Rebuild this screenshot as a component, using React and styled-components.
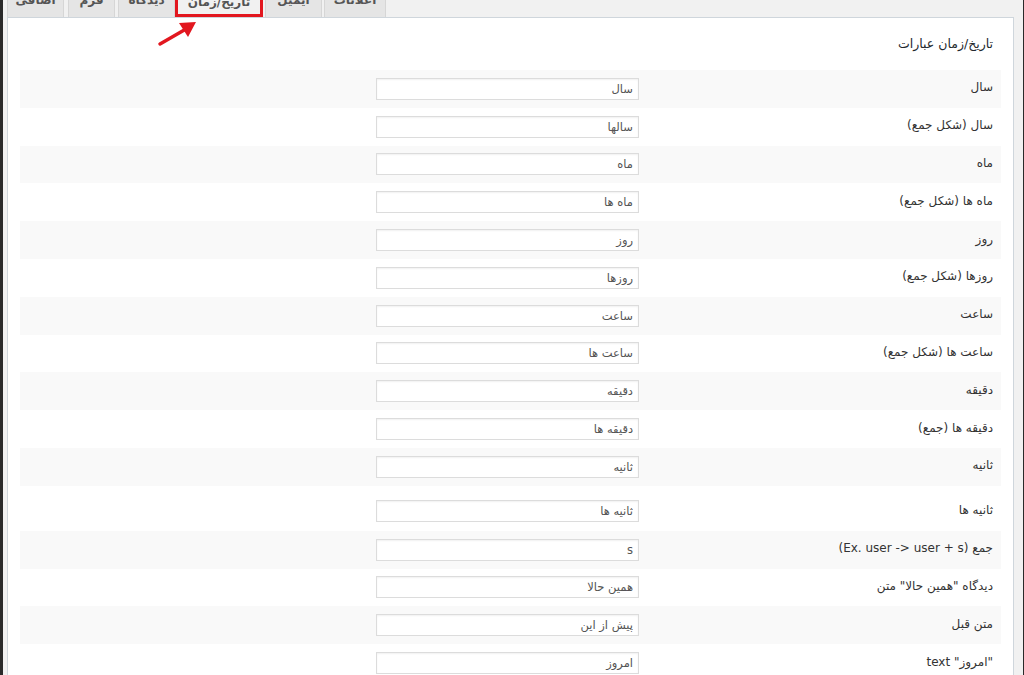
import React from 'react';
import styled, { createGlobalStyle } from 'styled-components';

const GlobalStyle = createGlobalStyle`
  html, body {
    margin: 0;
    padding: 0;
    background: #f1f1f1;
    font-family: "DejaVu Sans", Tahoma, sans-serif;
  }
`;

const Page = styled.div`
  position: relative;
  height: 675px;
  overflow: hidden;
  box-sizing: border-box;
  border-left: 3px solid #2a2a2a;
  border-right: 1px solid #2a2a2a;
  padding: 0 9px 0 4px;
  background: #f1f1f1;
  display: flex;
  flex-direction: column;
`;

const TabBar = styled.div`
  height: 17px;
  display: flex;
  align-items: flex-end;
  flex-shrink: 0;
`;

const Tab = styled.div`
  box-sizing: border-box;
  width: ${p => p.$w}px;
  margin-right: ${p => p.$gap}px;
  margin-top: -10px;
  height: 27px;
  line-height: 19px;
  text-align: center;
  font-size: 12px;
  font-weight: bold;
  color: #555;
  background: ${p => (p.$active ? '#f1f1f1' : '#e5e5e5')};
  border: ${p => (p.$active ? '3px solid #e2171f' : '1px solid #d6d6d6')};
  border-bottom: ${p => (p.$active ? '3px solid #e2171f' : 'none')};
  direction: rtl;
  white-space: nowrap;
  overflow: hidden;
`;

const Panel = styled.div`
  flex: 1;
  background: #fff;
  border: 1px solid #cfd6dc;
  border-bottom: none;
  padding: 0 12px;
  direction: rtl;
`;

const Heading = styled.h2`
  margin: 0;
  padding: 18px 8px 0 0;
  height: 52px;
  box-sizing: border-box;
  font-size: 12.5px;
  line-height: 16px;
  font-weight: normal;
  color: #23282d;
`;

const Row = styled.div`
  display: grid;
  grid-template-columns: 352px 1fr;
  align-items: center;
  height: ${p => (p.$tall ? 45 : 37.8)}px;
  padding-top: ${p => (p.$tall ? 6 : 0)}px;
  box-sizing: border-box;
  background: ${p => (p.$shade ? '#f9f9f9' : '#fff')};
`;

const Label = styled.div`
  padding-right: 8px;
  padding-bottom: 3px;
  font-size: 12px;
  color: #333;
  white-space: nowrap;
`;

const Cell = styled.div`
  padding-right: 10px;
  display: flex;
`;

const Input = styled.input`
  box-sizing: border-box;
  width: 263px;
  height: 22px;
  border: 1px solid #dcdcdc;
  box-shadow: inset 0 1px 2px rgba(0, 0, 0, 0.06);
  padding: 0 5px;
  font-family: "DejaVu Sans", Tahoma, sans-serif;
  font-size: 11.5px;
  color: #555;
  direction: rtl;
  text-align: right;
  background: #fff;
  outline: none;
`;

const Arrow = styled.svg`
  position: absolute;
  left: 150px;
  top: 16px;
  width: 50px;
  height: 34px;
`;

const tabs = [
  { label: 'اضافی', w: 57, gap: 4 },
  { label: 'فرم', w: 47, gap: 3 },
  { label: 'دیدگاه', w: 57, gap: 0 },
  { label: 'تاریخ/زمان', w: 88, gap: 2, active: true },
  { label: 'ایمیل', w: 57, gap: 2 },
  { label: 'اعلانات', w: 62, gap: 0 },
];

const rows = [
  ['سال', 'سال'],
  ['سال (شکل جمع)', 'سالها'],
  ['ماه', 'ماه'],
  ['ماه ها (شکل جمع)', 'ماه ها'],
  ['روز', 'روز'],
  ['روزها (شکل جمع)', 'روزها'],
  ['ساعت', 'ساعت'],
  ['ساعت ها (شکل جمع)', 'ساعت ها'],
  ['دقیقه', 'دقیقه'],
  ['دقیقه ها (جمع)', 'دقیقه ها'],
  ['ثانیه', 'ثانیه'],
  ['ثانیه ها', 'ثانیه ها', true],
  ['جمع (Ex. user -> user + s)', 's'],
  ['دیدگاه "همین حالا" متن', 'همین حالا'],
  ['متن قبل', 'پیش از این'],
  ['"امروز" text', 'امروز'],
];

export default function App() {
  return (
    <>
      <GlobalStyle />
      <Page>
        <TabBar>
          {tabs.map(t => (
            <Tab key={t.label} $w={t.w} $gap={t.gap} $active={t.active}>
              {t.label}
            </Tab>
          ))}
        </TabBar>
        <Panel>
          <Heading>تاریخ/زمان عبارات</Heading>
          {rows.map(([label, value, tall], i) => (
            <Row key={label} $shade={i % 2 === 0} $tall={tall}>
              <Label>{label}</Label>
              <Cell>
                <Input defaultValue={value} />
              </Cell>
            </Row>
          ))}
        </Panel>
        <Arrow viewBox="0 0 50 34">
          <line x1="7" y1="28" x2="33" y2="13" stroke="#e2171f" strokeWidth="3.5" strokeLinecap="round" />
          <polygon points="43,6 26,7 35,21" fill="#e2171f" />
        </Arrow>
      </Page>
    </>
  );
}
